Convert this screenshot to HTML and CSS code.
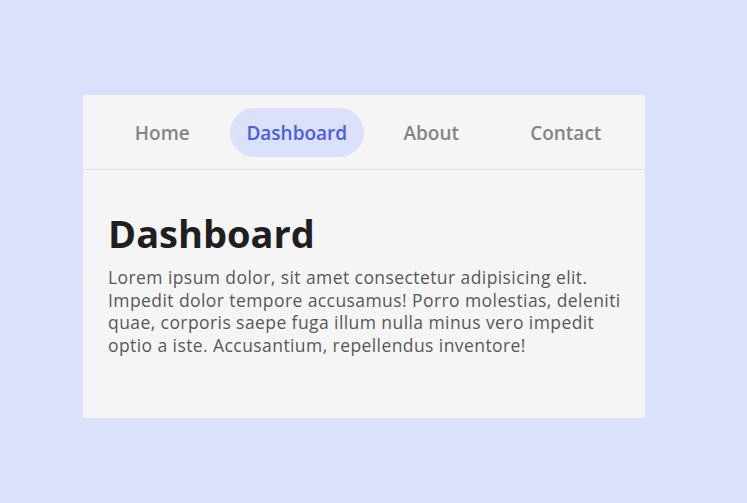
FILE: index.html
```html
<!DOCTYPE html>
<html>
<head>
<meta charset="utf-8">
<link rel="stylesheet" href="styles.css">
</head>
<body>
<div class="card">
  <nav class="nav">
    <a class="nav-item">Home</a>
    <a class="nav-item active">Dashboard</a>
    <a class="nav-item">About</a>
    <a class="nav-item">Contact</a>
  </nav>
  <section class="content">
    <h1 class="title">Dashboard</h1>
    <p class="text">Lorem ipsum dolor, sit amet consectetur adipisicing elit. Impedit dolor tempore accusamus! Porro molestias, deleniti quae, corporis saepe fuga illum nulla minus vero impedit optio a iste. Accusantium, repellendus inventore!</p>
  </section>
</div>
</body>
</html>
```

FILE: styles.css
```css
html, body {
  margin: 0;
  padding: 0;
}
body {
  background: #dbe1fb;
  font-family: "Open Sans", "Liberation Sans", sans-serif;
  width: 747px;
  height: 503px;
  padding-top: 95px;
  padding-left: 83px;
  box-sizing: border-box;
}
.card {
  width: 562px;
  height: 323px;
  background: #f5f5f5;
}
.nav {
  display: grid;
  grid-template-columns: repeat(4, 1fr);
  padding: 13px 12px 12px;
  border-bottom: 1px solid #e0e0e0;
}
.nav-item {
  height: 49px;
  border-radius: 25px;
  display: flex;
  align-items: center;
  justify-content: center;
  font-size: 19px;
  font-weight: 600;
  color: #858585;
}
.nav-item.active {
  background: #dbe1fb;
  color: #4b5ce6;
}
.content {
  padding: 38px 16px 0 25px;
}
.title {
  margin: 0;
  font-size: 38px;
  font-weight: 700;
  color: #1f1f1f;
  line-height: 50px;
}
.text {
  margin: 8px 0 0;
  font-size: 17.5px;
  line-height: 22.6px;
  letter-spacing: 0.42px;
  color: #585858;
}
```
